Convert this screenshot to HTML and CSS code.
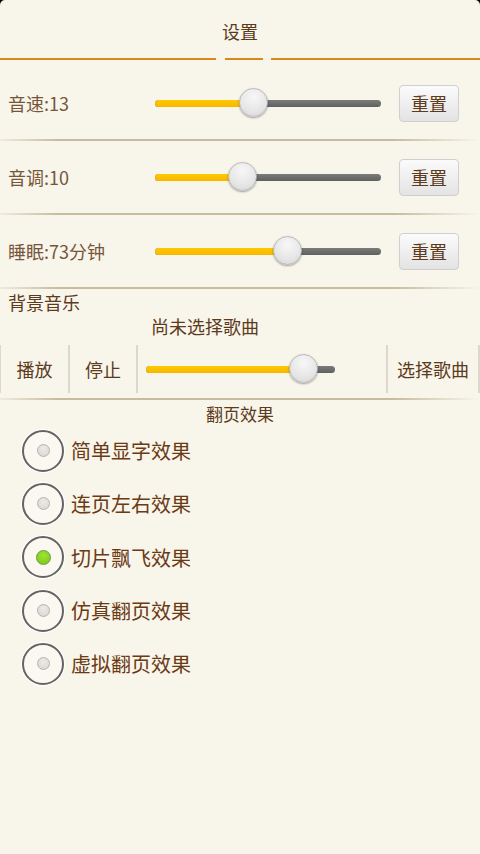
FILE: index.html
```html
<!DOCTYPE html>
<html lang="zh">
<head>
<meta charset="utf-8">
<title>设置</title>
<link rel="stylesheet" href="styles.css">
</head>
<body>
<div class="page">
  <header class="header">
    <div class="title">设置</div>
    <div class="title-rule">
      <span class="seg seg-left"></span>
      <span class="seg seg-mid"></span>
      <span class="seg seg-right"></span>
    </div>
  </header>

  <section class="settings">
    <div class="row">
      <div class="label">音速:13</div>
      <div class="slider">
        <div class="track"><div class="fill" style="width:43.5%"></div></div>
        <div class="thumb" style="left:43.5%"></div>
      </div>
      <button class="btn">重置</button>
    </div>
    <div class="rule"></div>
    <div class="row">
      <div class="label">音调:10</div>
      <div class="slider">
        <div class="track"><div class="fill" style="width:38.5%"></div></div>
        <div class="thumb" style="left:38.5%"></div>
      </div>
      <button class="btn">重置</button>
    </div>
    <div class="rule"></div>
    <div class="row">
      <div class="label">睡眠:73分钟</div>
      <div class="slider">
        <div class="track"><div class="fill" style="width:58.5%"></div></div>
        <div class="thumb" style="left:58.5%"></div>
      </div>
      <button class="btn">重置</button>
    </div>
    <div class="rule"></div>
  </section>

  <section class="music">
    <div class="music-title">背景音乐</div>
    <div class="song">尚未选择歌曲</div>
    <div class="controls">
      <div class="ctl ctl-play">播放</div>
      <div class="ctl ctl-stop">停止</div>
      <div class="ctl ctl-slider">
        <div class="slider slider-music">
          <div class="track"><div class="fill" style="width:83%"></div></div>
          <div class="thumb" style="left:83%"></div>
        </div>
      </div>
      <div class="ctl ctl-pick">选择歌曲</div>
    </div>
    <div class="rule"></div>
  </section>

  <section class="effects">
    <div class="effects-title">翻页效果</div>
    <ul class="radios">
      <li class="radio"><span class="circle"><span class="dot"></span></span><span class="rlabel">简单显字效果</span></li>
      <li class="radio"><span class="circle"><span class="dot"></span></span><span class="rlabel">连页左右效果</span></li>
      <li class="radio checked"><span class="circle"><span class="dot"></span></span><span class="rlabel">切片飘飞效果</span></li>
      <li class="radio"><span class="circle"><span class="dot"></span></span><span class="rlabel">仿真翻页效果</span></li>
      <li class="radio"><span class="circle"><span class="dot"></span></span><span class="rlabel">虚拟翻页效果</span></li>
    </ul>
  </section>
</div>
</body>
</html>
```

FILE: styles.css
```css
html {
  background: #000;
}
body {
  margin: 0;
  font-family: "Noto Sans CJK SC", "Noto Sans", sans-serif;
  color: #5c3a1c;
}
.page {
  background: #f8f5eb;
  min-height: 854px;
  border-radius: 5px 5px 0 0;
  overflow: hidden;
}

/* header */
.header {
  height: 60px;
  display: flex;
  flex-direction: column;
}
.title {
  height: 58px;
  display: flex;
  align-items: center;
  justify-content: center;
  font-size: 18px;
  color: #5c3a1c;
  padding-top: 4px;
  box-sizing: border-box;
}
.title-rule {
  display: flex;
  height: 2px;
}
.seg {
  height: 2px;
  background: #d9891c;
}
.seg-left { width: 216px; }
.seg-mid { width: 38px; margin-left: 9px; }
.seg-right { flex: 1; margin-left: 8px; }

/* setting rows */
.settings {
  padding-top: 7px;
}
.row {
  height: 72px;
  display: flex;
  align-items: center;
}
.label {
  width: 147px;
  padding-left: 8px;
  font-size: 18px;
  color: #76553a;
  white-space: nowrap;
}
.rule {
  height: 2px;
  background: linear-gradient(to right, rgba(190,178,146,0.15), #c7bc9f 12%, #c7bc9f 82%, rgba(199,188,159,0));
}

.slider {
  position: relative;
  width: 226px;
  height: 30px;
  display: flex;
  align-items: center;
}
.track {
  width: 100%;
  height: 7px;
  border-radius: 4px;
  background: linear-gradient(#7a7c7a, #5f615f);
  overflow: hidden;
}
.fill {
  height: 100%;
  background: linear-gradient(#ffc800, #f5b800);
}
.thumb {
  position: absolute;
  top: 0;
  width: 29px;
  height: 29px;
  margin-left: -14px;
  border-radius: 50%;
  background: radial-gradient(circle at 50% 30%, #f7f7f7 0%, #e6e6e6 60%, #d4d4d4 100%);
  border: 1px solid #b9b9b9;
  box-shadow: 0 1px 2px rgba(0,0,0,0.35);
  box-sizing: border-box;
}

.btn {
  margin-left: 18px;
  width: 60px;
  height: 37px;
  border: 1px solid #cfcfcf;
  border-radius: 4px;
  background: linear-gradient(#fbfbfb, #e3e3e3);
  font-family: inherit;
  font-size: 18px;
  color: #5c3a1c;
  padding: 0;
}

/* music */
.music-title {
  padding-left: 8px;
  height: 26px;
  line-height: 26px;
  font-size: 18px;
  color: #5c3a1c;
}
.song {
  height: 26px;
  line-height: 22px;
  padding-left: 151px;
  font-size: 18px;
  color: #5c3a1c;
}
.controls {
  display: flex;
  height: 48px;
  margin-top: 4px;
  margin-bottom: 5px;
  border-left: 1px solid #dcd8cb;
}
.ctl {
  display: flex;
  align-items: center;
  justify-content: center;
  font-size: 18px;
  color: #5c3a1c;
  border-right: 2px solid #dcd8cb;
  box-sizing: border-box;
}
.ctl-play { width: 69px; }
.ctl-stop { width: 68px; }
.ctl-slider {
  width: 250px;
  justify-content: flex-start;
  padding-left: 8px;
}
.slider-music {
  width: 189px;
}
.ctl-pick { width: 92px; }

/* effects */
.effects-title {
  text-align: center;
  font-size: 17px;
  height: 24px;
  line-height: 28px;
  color: #5c3a1c;
}
.radios {
  list-style: none;
  margin: 0;
  padding: 0 0 0 22px;
}
.radio {
  height: 53.3px;
  display: flex;
  align-items: center;
}
.circle {
  width: 42px;
  height: 42px;
  border-radius: 50%;
  border: 2px solid #646464;
  box-sizing: border-box;
  background: #faf8f1;
  box-shadow: 0 0 0 1px #ffffff;
  display: flex;
  align-items: center;
  justify-content: center;
}
.dot {
  width: 13px;
  height: 13px;
  border-radius: 50%;
  background: radial-gradient(circle at 50% 35%, #ecebe8, #d6d4cf);
  border: 1px solid #b6b3ac;
  box-sizing: border-box;
}
.radio.checked .dot {
  width: 15px;
  height: 15px;
  background: radial-gradient(circle at 50% 35%, #9fe437, #78c414);
  border-color: #6a9a3a;
}
.rlabel {
  margin-left: 7px;
  font-size: 20px;
  color: #6b3a14;
}
```
